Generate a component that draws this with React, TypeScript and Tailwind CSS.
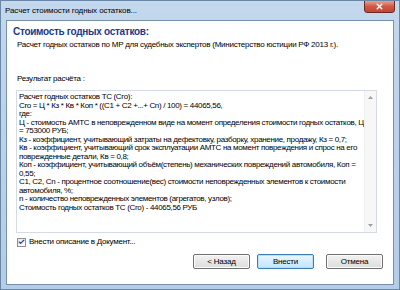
import { Check, X } from 'lucide-react';

const lines = [
    'Расчет годных остатков ТС (Сго):',
    'Сго = Ц * Кз * Кв * Коп * ((C1 + C2 +...+ Cn) / 100) = 44065,56,',
    'где:',
    'Ц - стоимость АМТС в неповрежденном виде на момент определения стоимости годных остатков, Ц',
    '= 753000 РУБ;',
    'Кз - коэффициент, учитывающий затраты на дефектовку, разборку, хранение, продажу, Кз = 0,7;',
    'Кв - коэффициент, учитывающий срок эксплуатации АМТС на момент повреждения и спрос на его',
    'поврежденные детали, Кв = 0,8;',
    'Коп - коэффициент, учитывающий объём(степень) механических повреждений автомобиля, Коп =',
    '0,55;',
    'C1, C2, Cn - процентное соотношение(вес) стоимости неповрежденных элементов к стоимости',
    'автомобиля, %;',
    'n - количество неповрежденных элементов (агрегатов, узлов);',
    'Стоимость годных остатков ТС (Сго) - 44065,56 РУБ',
];

function Button({ label, focused }: { label: string; focused?: boolean }) {
    return (
        <div
            className={`w-[57px] h-[15px] rounded-[2px] flex items-center justify-center text-[8px] tracking-[-0.2px] text-black border ${
                focused
                    ? 'border-[#3c7fb1] bg-gradient-to-b from-[#eaf6fd] to-[#bee6fd] shadow-[inset_0_0_0_1px_#b6e0f7]'
                    : 'border-[#707070] bg-gradient-to-b from-[#f2f2f2] to-[#dddddd] shadow-[inset_0_0_0_1px_#fcfcfc]'
            }`}
        >
            {label}
        </div>
    );
}

export default function App() {
    return (
        <div
            className="w-[400px] h-[290px] flex flex-col bg-gradient-to-b from-[#c3d7ed] to-[#b4cce6] border border-[#6b87a8] overflow-hidden"
            style={{ fontFamily: '"Liberation Sans", Arial, sans-serif' }}
        >
            {/* title bar */}
            <div className="h-[19px] flex justify-between pl-[4px] pr-[4px]">
                <span className="text-[8px] text-black leading-[8px] mt-[6px] tracking-[-0.1px]">Расчет стоимости годных остатков...</span>
                <div className="w-[31px] h-[13px] -mt-px rounded-b-[3px] border border-[#6e2b25] bg-gradient-to-b from-[#e7a190] via-[#cf5844] to-[#c24630] flex items-center justify-center">
                    <X className="w-[9px] h-[9px] text-white" strokeWidth={4} />
                </div>
            </div>

            {/* client area */}
            <div className="flex-1 mx-[5px] mb-[4px] border border-[#7790ad] bg-white flex flex-col text-[8px] tracking-[-0.25px] text-black">
                <div className="pl-[6px] pt-[5px]">
                    <div className="text-[10px] leading-[12px] font-bold text-[#1b3a8c] tracking-[-0.3px]">Стоимость годных остатков:</div>
                    <div className="leading-[10px] pl-[4px] mt-[2px]">
                        Расчет годных остатков по МР для судебных экспертов (Министерство юстиции РФ 2013 г.).
                    </div>
                </div>

                <div className="leading-[10px] pl-[10px] mt-[24px]">Результат расчёта :</div>

                <div className="ml-[9px] mr-[16px] mt-[6px] h-[143px] border border-[#d5dbe3] flex">
                    <div className="flex-1 pl-[2px] pt-[2px] leading-[8.5px] tracking-[-0.33px] whitespace-nowrap overflow-hidden">
                        {lines.map((l, i) => (
                            <div key={i}>{l}</div>
                        ))}
                    </div>
                    <div className="w-[12px] bg-[#f7f7f7] border-l border-[#eeeeee] flex flex-col justify-between items-center py-[5px]">
                        <svg width="5" height="3" viewBox="0 0 5 3">
                            <path d="M0 3 L2.5 0 L5 3 Z" fill="#a0a0a0" />
                        </svg>
                        <svg width="5" height="3" viewBox="0 0 5 3">
                            <path d="M0 0 L2.5 3 L5 0 Z" fill="#a0a0a0" />
                        </svg>
                    </div>
                </div>

                <div className="flex items-center gap-[3px] pl-[10px] mt-[4px]">
                    <div className="w-[9px] h-[9px] border border-[#8e8f8f] bg-gradient-to-br from-[#e6e6e6] to-[#ffffff] flex items-center justify-center">
                        <Check className="w-[8px] h-[8px] text-[#2c4a8a]" strokeWidth={4} />
                    </div>
                    <span className="leading-[10px]">Внести описание в Документ...</span>
                </div>

                <div className="flex justify-end mt-[7px] mr-[10px]">
                    <Button label="< Назад" />
                    <div className="w-[7px]" />
                    <Button label="Внести" focused />
                    <div className="w-[12px]" />
                    <Button label="Отмена" />
                </div>
            </div>
        </div>
    );
}
